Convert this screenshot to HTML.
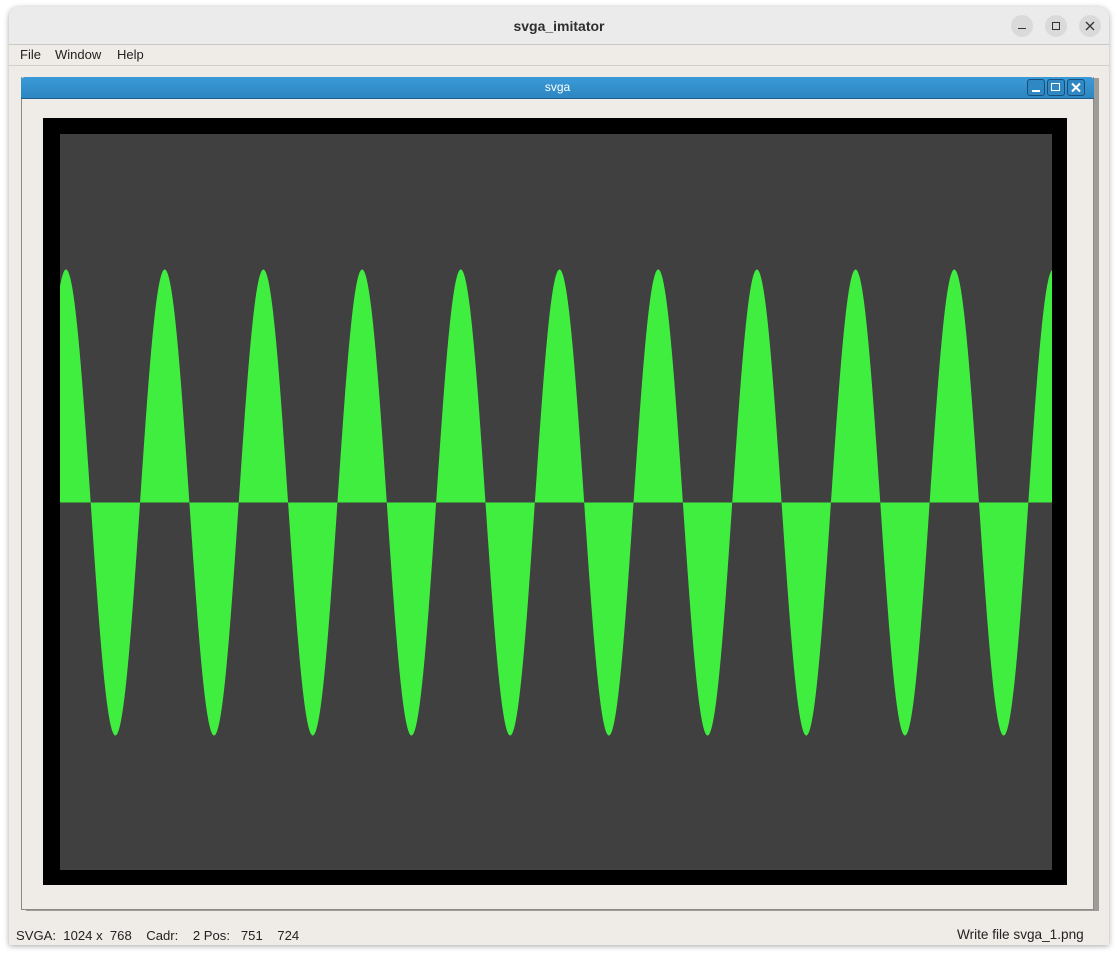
<!DOCTYPE html>
<html><head><meta charset="utf-8"><style>
html,body{margin:0;padding:0;width:1118px;height:955px;background:#fff;overflow:hidden;font-family:"Liberation Sans","DejaVu Sans",sans-serif}
.win{position:absolute;left:9px;top:7px;width:1100px;height:938px;background:#efebe7;border-radius:10px 10px 0 0;box-shadow:0 1px 6px rgba(0,0,0,.35);overflow:hidden}
.tb{position:absolute;left:0;top:0;width:100%;height:37px;background:#ebebeb;border-bottom:1px solid #c8c8c8;text-align:center;line-height:38px;font-weight:bold;font-size:14px;color:#2e2e2e}
.cb{position:absolute;top:8px;width:22px;height:22px;border-radius:50%;background:#dadada}
.menu{position:absolute;top:38px;left:0;width:100%;height:20px;border-bottom:1px solid #d3d0cc;font-size:13px;color:#222;line-height:20px}
.menu span{position:absolute}
.sub{position:absolute;left:12px;top:70px;width:1071px;height:832px;background:#efebe7;border:1px solid #8a8a8a;border-top:none;box-shadow:5px 1px 0 #9e9c98}
.stb{position:absolute;left:-1px;top:0;width:1073px;height:21px;background:linear-gradient(#3a9ad8,#2d86c0);border-bottom:1px solid #1f5f8e;border-radius:4px 4px 0 0;color:#fff;text-align:center;font-size:12px;line-height:21px}
.sb{position:absolute;top:2px;width:16px;height:15px;border:1px solid #174f78;border-radius:3px;background:#2f88c4}
.status{position:absolute;top:920px;font-size:13.6px;color:#222}
</style></head><body>
<div class="win">
 <div class="tb">svga_imitator
  <div class="cb" style="left:1002px"><div style="position:absolute;left:7px;top:13px;width:8px;height:1px;background:#333"></div></div>
  <div class="cb" style="left:1036px"><div style="position:absolute;left:7px;top:7px;width:6px;height:6px;border:1px solid #333"></div></div>
  <div class="cb" style="left:1070px"><svg width="22" height="22" style="position:absolute;left:0;top:0"><path d="M7 7L15 15M15 7L7 15" stroke="#333" stroke-width="1.3"/></svg></div>
 </div>
 <div class="menu"><span style="left:11px">File</span><span style="left:46px">Window</span><span style="left:108px">Help</span></div>
 <div class="sub">
  <div class="stb">svga
   <div class="sb" style="left:1006px"><div style="position:absolute;left:4px;top:10px;width:8px;height:2px;background:#fff"></div></div>
   <div class="sb" style="left:1026px"><div style="position:absolute;left:3px;top:3px;width:7px;height:6px;border:1.5px solid #fff"></div></div>
   <div class="sb" style="left:1046px"><svg width="16" height="15" style="position:absolute;left:0;top:0"><path d="M4 3.5L12 11.5M12 3.5L4 11.5" stroke="#fff" stroke-width="2"/></svg></div>
  </div>
 </div>
 <div class="status" style="left:7px;font-size:13.1px;top:921px">SVGA:&nbsp; 1024 x&nbsp; 768&nbsp;&nbsp;&nbsp; Cadr:&nbsp;&nbsp;&nbsp; 2 Pos:&nbsp;&nbsp; 751&nbsp;&nbsp;&nbsp; 724</div>
 <div class="status" style="left:948px">Write file svga_1.png</div>
</div>
<svg width="1118" height="955" style="position:absolute;left:0;top:0">
 <rect x="43" y="118" width="1024" height="767" fill="#000"/>
 <rect x="60" y="134" width="992" height="736" fill="#404040"/>
 <path id="w" fill="#40ee40" fill-rule="evenodd"/>
</svg>
<script>
var d="M60 502.5";
for(var x=60;x<=1052;x+=0.5){var y=502.5-233*Math.cos(2*Math.PI*(x-66)/98.7);d+="L"+x+" "+y.toFixed(2);}
d+="L1052 502.5Z";
document.getElementById("w").setAttribute("d",d);
</script>
</body></html>
